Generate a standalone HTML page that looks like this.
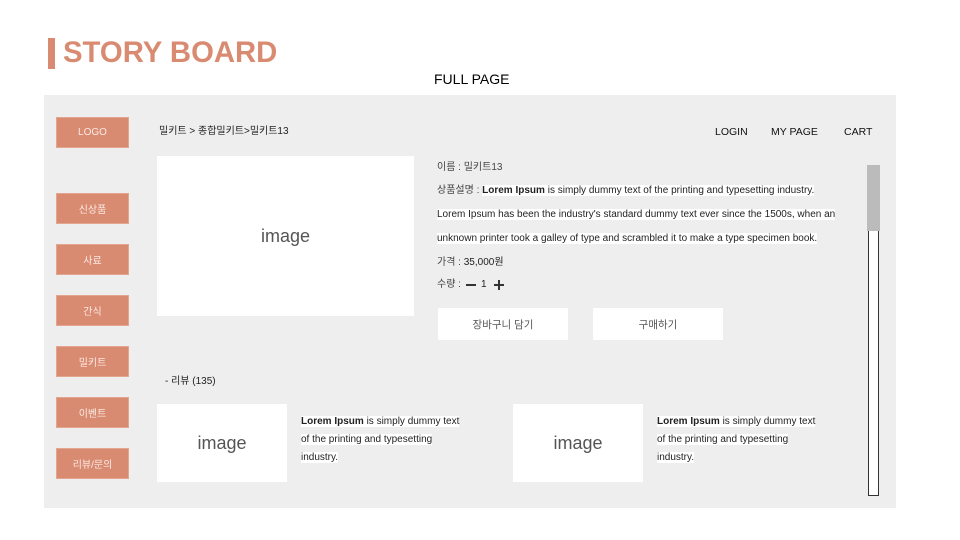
<!DOCTYPE html>
<html><head><meta charset="utf-8"><style>
*{margin:0;padding:0;box-sizing:border-box}
body{width:960px;height:540px;background:#fff;position:relative;overflow:hidden;font-family:"Liberation Sans","Noto Sans CJK KR",sans-serif;color:#222}
.a{position:absolute}
.bar{left:48px;top:38px;width:7px;height:31px;background:#d98b72}
.title{left:63px;top:35px;font-size:29.3px;font-weight:bold;color:#d98b72;line-height:36px}
.fp{left:434px;top:70px;font-size:14px;line-height:18px;color:#000}
.panel{left:44px;top:95px;width:852px;height:413px;background:#eeeeee}
.nav{left:56px;width:73px;height:31px;background:#d98b72;border:1px solid #e4a590;color:#fbe9e3;font-size:10px;display:flex;align-items:center;justify-content:center}
.w{background:#fff}
.img{display:flex;align-items:center;justify-content:center;color:#555;font-size:18px}
.t{font-size:10px;line-height:12px;color:#222}
.hl{background:#fff}
.btn{background:#fff;display:flex;align-items:center;justify-content:center;font-size:10.5px;color:#555}
.menu{top:126px;font-size:10.5px;color:#111}
</style></head><body>
<div class="a bar"></div>
<div class="a title">STORY BOARD</div>
<div class="a fp">FULL PAGE</div>
<div class="a panel"></div>
<div class="a nav" style="top:117px">LOGO</div>
<div class="a nav" style="top:193px">신상품</div>
<div class="a nav" style="top:244px">사료</div>
<div class="a nav" style="top:295px">간식</div>
<div class="a nav" style="top:346px">밀키트</div>
<div class="a nav" style="top:397px">이벤트</div>
<div class="a nav" style="top:448px">리뷰/문의</div>
<div class="a t" style="left:159px;top:126px">밀키트 &gt; 종합밀키트&gt;밀키트13</div>
<div class="a menu" style="left:715px">LOGIN</div>
<div class="a menu" style="left:771px">MY PAGE</div>
<div class="a menu" style="left:844px">CART</div>
<div class="a w img" style="left:157px;top:156px;width:257px;height:160px">image</div>
<div class="a t" style="left:437px;top:162px;color:#444">이름 : 밀키트13</div>
<div class="a t" style="left:437px;top:185px"><span style="color:#444">상품설명 : </span><span class="hl"><b>Lorem Ipsum</b> is simply dummy text of the printing and typesetting industry.</span></div>
<div class="a t" style="left:437px;top:209px"><span class="hl">Lorem Ipsum has been the industry's standard dummy text ever since the 1500s, when an</span></div>
<div class="a t" style="left:437px;top:233px"><span class="hl">unknown printer took a galley of type and scrambled it to make a type specimen book.</span></div>
<div class="a t" style="left:437px;top:257px"><span style="color:#444">가격 : </span>35,000원</div>
<div class="a t" style="left:437px;top:279px"><span style="color:#444">수량 :</span></div>
<div class="a" style="left:466px;top:284px;width:10px;height:2px;background:#333"></div>
<div class="a t" style="left:481px;top:279px">1</div>
<div class="a" style="left:494px;top:284px;width:10px;height:2px;background:#333"></div>
<div class="a" style="left:498px;top:280px;width:2px;height:10px;background:#333"></div>
<div class="a btn" style="left:438px;top:308px;width:130px;height:32px">장바구니 담기</div>
<div class="a btn" style="left:593px;top:308px;width:130px;height:32px">구매하기</div>
<div class="a" style="left:868px;top:165px;width:11px;height:331px;background:#fff;border:1px solid #333"></div>
<div class="a" style="left:867px;top:165px;width:13px;height:66px;background:#bbb"></div>
<div class="a t" style="left:165px;top:376px">- 리뷰 (135)</div>
<div class="a w img" style="left:157px;top:404px;width:130px;height:78px">image</div>
<div class="a t" style="left:301px;top:413px;line-height:18px"><span class="hl"><b>Lorem Ipsum</b> is simply dummy text</span><br><span class="hl">of the printing and typesetting</span><br><span class="hl">industry.</span></div>
<div class="a w img" style="left:513px;top:404px;width:130px;height:78px">image</div>
<div class="a t" style="left:657px;top:413px;line-height:18px"><span class="hl"><b>Lorem Ipsum</b> is simply dummy text</span><br><span class="hl">of the printing and typesetting</span><br><span class="hl">industry.</span></div>
</body></html>
